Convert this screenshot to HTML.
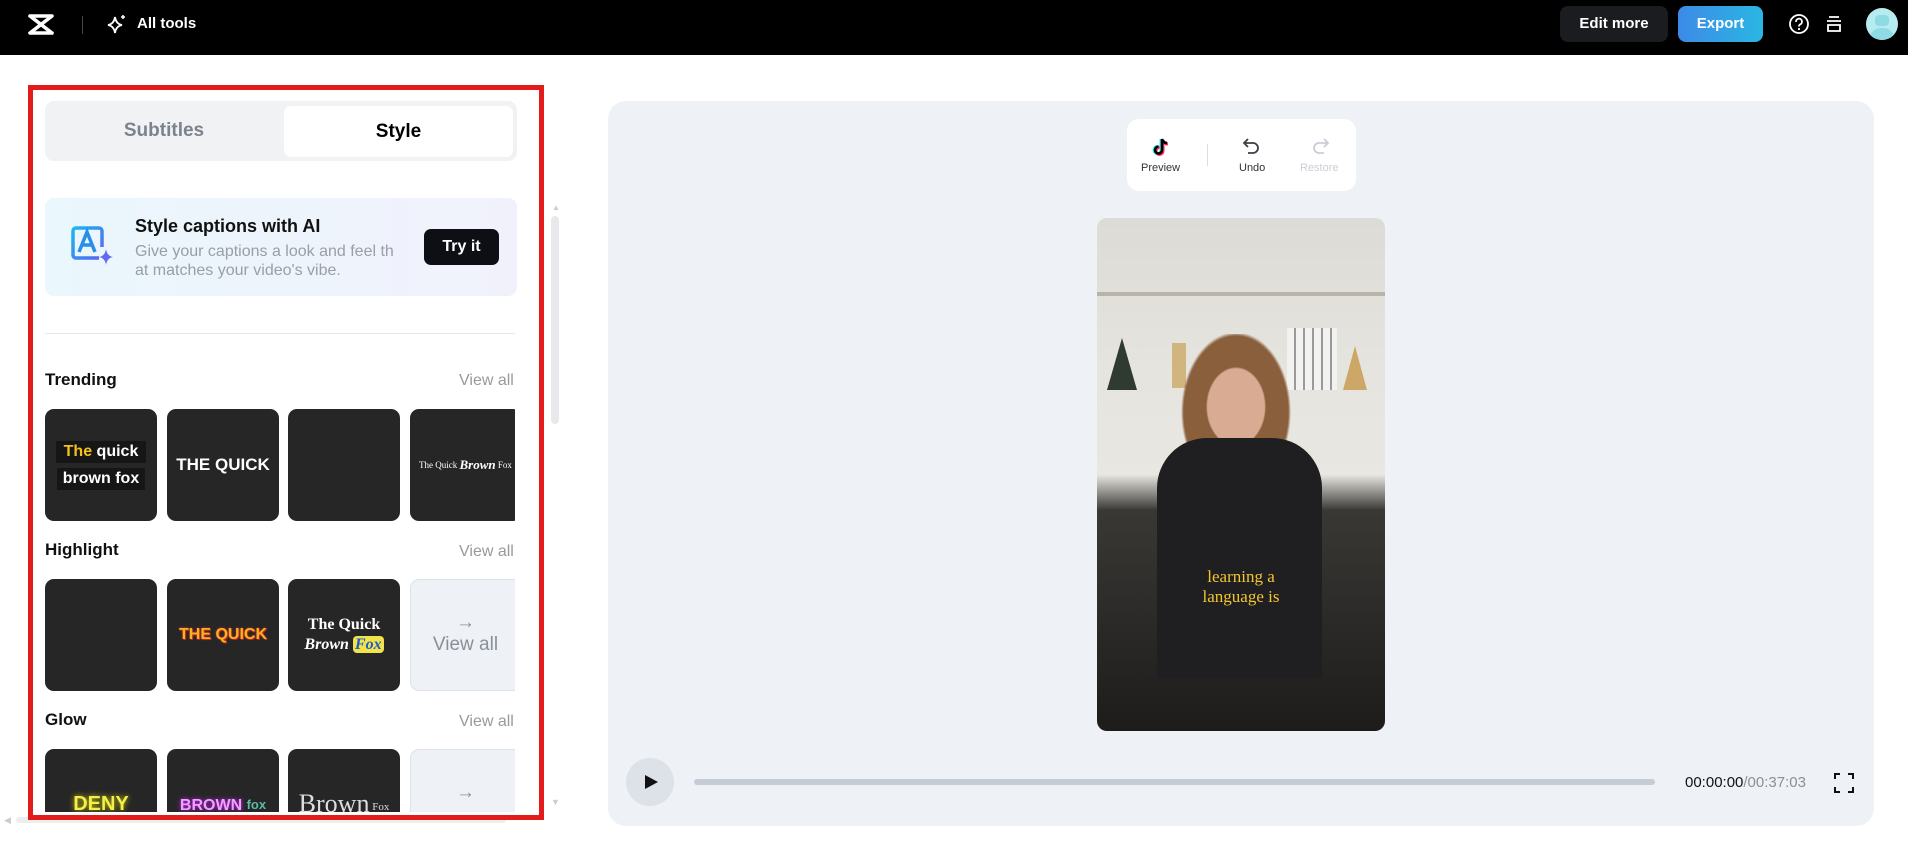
<!DOCTYPE html>
<html><head><meta charset="utf-8"><style>
*{box-sizing:border-box;margin:0;padding:0}
body{width:1908px;height:855px;overflow:hidden;background:#fff;font-family:"Liberation Sans",sans-serif;position:relative}
.abs{position:absolute}
.top{left:0;top:0;width:1908px;height:55px;background:#000}
.thumb{position:absolute;width:112px;height:112px;background:#262626;border-radius:9px;overflow:hidden;display:flex;align-items:center;justify-content:center;color:#fff;font-weight:bold}
.lbl{position:absolute;left:45px;font-size:17px;font-weight:bold;color:#111}
.va{position:absolute;left:459px;font-size:16px;color:#999}
.va2{position:absolute;width:110px;height:112px;background:#eef1f5;border:1px solid #dde2e8;border-radius:9px 0 0 9px;border-right:none;color:#8a9099;text-align:center}
</style></head><body>
<div class="abs top"></div>
<svg class="abs" style="left:25px;top:12px" width="30" height="26" viewBox="0 0 30 26"><path d="M5 4H27L5 21H27M5 4L27 21" fill="none" stroke="#fff" stroke-width="3.6" stroke-linejoin="round" stroke-linecap="round"/></svg>
<div class="abs" style="left:82px;top:16px;width:1px;height:18px;background:#444"></div>
<svg class="abs" style="left:106px;top:13px" width="22" height="22" viewBox="0 0 22 22"><path d="M9 4 Q10 11 16 12 Q10 13 9 20 Q8 13 2 12 Q8 11 9 4Z" fill="none" stroke="#fff" stroke-width="1.8"/><path d="M17 2v4M15 4h4" stroke="#fff" stroke-width="1.5"/></svg>
<div class="abs" style="left:137px;top:15px;color:#fff;font-size:15px;font-weight:bold">All tools</div>
<div class="abs" style="left:1560px;top:6px;width:108px;height:36px;background:#1b1c1f;border-radius:8px;color:#fff;font-weight:bold;font-size:15px;text-align:center;line-height:36px">Edit more</div>
<div class="abs" style="left:1678px;top:6px;width:85px;height:36px;background:linear-gradient(90deg,#3c8ae6,#2ab7e3);border-radius:8px;color:#fff;font-weight:bold;font-size:15px;text-align:center;line-height:36px">Export</div>
<svg class="abs" style="left:1788px;top:13px" width="22" height="22" viewBox="0 0 22 22"><circle cx="11" cy="11" r="9" fill="none" stroke="#fff" stroke-width="1.8"/><path d="M8 9a3 3 0 1 1 4 2.5c-1 .5-1 1-1 2" fill="none" stroke="#fff" stroke-width="1.8"/><circle cx="11" cy="16" r="1.1" fill="#fff"/></svg>
<svg class="abs" style="left:1824px;top:14px" width="20" height="20" viewBox="0 0 20 20"><path d="M5 3h10M3 7h14M4 11h12v6H4z" fill="none" stroke="#fff" stroke-width="1.8"/></svg>
<div class="abs" style="left:1866px;top:8px;width:32px;height:32px;border-radius:50%;background:#b6ecf0;overflow:hidden"><div style="margin:7px auto 0;width:14px;height:11px;background:#8edbe4;border-radius:4px"></div><div style="margin:2px auto 0;width:26px;height:14px;background:#8edbe4;border-radius:12px 12px 0 0"></div></div>

<!-- left panel -->
<div class="abs" style="left:4px;top:815px;color:#ccc;font-size:9px">◀</div>
<div class="abs" style="left:16px;top:817px;width:490px;height:6px;background:#eee;border-radius:3px"></div>
<div class="abs" style="left:45px;top:101px;width:472px;height:60px;background:#f1f2f4;border-radius:9px"></div>
<div class="abs" style="left:45px;top:101px;width:238px;height:60px;line-height:60px;text-align:center;color:#7c838e;font-weight:bold;font-size:19px">Subtitles</div>
<div class="abs" style="left:284px;top:106px;width:229px;height:51px;background:#fff;border-radius:7px;line-height:51px;text-align:center;color:#000;font-weight:bold;font-size:19px">Style</div>
<div class="abs" style="left:45px;top:198px;width:472px;height:98px;background:linear-gradient(90deg,#eaf7fc,#f1f1fc);border-radius:9px"></div>
<svg class="abs" style="left:68px;top:225px" width="48" height="48" viewBox="0 0 46 48"><defs><linearGradient id="g" x1="0" y1="0" x2="1" y2="1"><stop offset="0" stop-color="#1ab8ee"/><stop offset="1" stop-color="#5a63f0"/></linearGradient></defs><path d="M30 33H7a3 3 0 0 1-3-3V6a3 3 0 0 1 3-3h23a3 3 0 0 1 3 3v16" fill="none" stroke="url(#g)" stroke-width="3.5"/><path d="M10 27l8-20 8 20M13 20h10" fill="none" stroke="#2a8ee8" stroke-width="3.5"/><path d="M37 24q1 7 7 8q-6 1-7 8q-1-7-7-8q6-1 7-8z" fill="#5f6af2"/></svg>
<div class="abs" style="left:135px;top:216px;font-size:18px;font-weight:bold;color:#111">Style captions with AI</div>
<div class="abs" style="left:135px;top:242px;font-size:16px;color:#9a9ea6;line-height:19px;width:290px">Give your captions a look and feel th<br>at matches your video's vibe.</div>
<div class="abs" style="left:424px;top:229px;width:75px;height:36px;background:#0e0f14;border-radius:7px;color:#fff;font-weight:bold;font-size:16px;text-align:center;line-height:36px">Try it</div>
<div class="abs" style="left:45px;top:333px;width:470px;height:1px;background:#e5e7ea"></div>
<div class="abs" style="left:552px;top:203px;color:#ccc;font-size:8px">▲</div>
<div class="abs" style="left:551px;top:216px;width:8px;height:208px;background:#e8e9ec;border-radius:4px"></div>
<div class="abs" style="left:551px;top:797px;color:#ccc;font-size:9px">▼</div>

<div class="lbl" style="top:370px">Trending</div><div class="va" style="top:372px">View all</div>
<div class="abs" style="left:45px;top:409px;width:470px;height:403px;overflow:hidden">
 <div class="thumb" style="left:0;top:0;flex-direction:column;font-size:16px;gap:5px"><span style="background:#161616;padding:2px 8px"><span style="color:#f2c21b">The</span> quick</span><span style="background:#161616;padding:2px 6px">brown fox</span></div>
 <div class="thumb" style="left:122px;top:0;font-size:17px">THE QUICK</div>
 <div class="thumb" style="left:243px;top:0"></div>
 <div class="thumb" style="left:365px;top:0;font-family:'Liberation Serif',serif;font-size:9px;justify-content:flex-start;padding-left:9px;white-space:nowrap;font-weight:normal">The Quick&nbsp;<i style="font-size:13px;font-weight:bold">Brown</i>&nbsp;Fox</div>
 <div class="thumb" style="left:0;top:170px"></div>
 <div class="thumb" style="left:122px;top:170px;color:#f7b31b;font-size:16px;text-shadow:0 0 2px #d33,1px 1px 0 #b22">THE QUICK</div>
 <div class="thumb" style="left:243px;top:170px;flex-direction:column;font-family:'Liberation Serif',serif;font-size:16px;line-height:20px"><span>The Quick</span><i>Brown <span style="background:#f2e34a;color:#1a5bd0;border-radius:4px;padding:0 2px">Fox</span></i></div>
 <div class="va2" style="left:365px;top:170px;padding-top:32px;font-size:19px">→<br>View all</div>
 <div class="thumb" style="left:0;top:340px;align-items:flex-start;padding-top:44px;color:#f3ee4a;font-size:20px;text-shadow:0 0 6px #cc0">DENY</div>
 <div class="thumb" style="left:122px;top:340px;align-items:flex-start;padding-top:48px;color:#f2a0ff;font-size:16px;text-shadow:0 0 5px #c2f">BROWN&nbsp;<span style="color:#5dbaa8;font-size:13px;text-shadow:none">fox</span></div>
 <div class="thumb" style="left:243px;top:340px;align-items:flex-start;padding-top:40px;color:#ddd;font-weight:normal;font-family:'Liberation Serif',serif;font-size:26px">Brown<span style="font-size:11px;padding-top:12px">&nbsp;Fox</span></div>
 <div class="va2" style="left:365px;top:340px;padding-top:32px;font-size:19px">→</div>
</div>
<div class="lbl" style="top:540px">Highlight</div><div class="va" style="top:543px">View all</div>
<div class="lbl" style="top:710px">Glow</div><div class="va" style="top:713px">View all</div>
<div class="abs" style="left:28px;top:85px;width:516px;height:735px;border:5px solid #e31b1b"></div>

<!-- right preview -->
<div class="abs" style="left:608px;top:101px;width:1266px;height:725px;background:#eef1f5;border-radius:18px"></div>
<div class="abs" style="left:1127px;top:119px;width:229px;height:72px;background:#fff;border-radius:12px"></div>
<svg class="abs" style="left:1152px;top:137px" width="18" height="20" viewBox="0 0 18 20"><path d="M10 2v11a3.5 3.5 0 1 1-3.5-3.5M10 2q1 4 5 4" fill="none" stroke="#25f4ee" stroke-width="3" transform="translate(-1,0)"/><path d="M10 2v11a3.5 3.5 0 1 1-3.5-3.5M10 2q1 4 5 4" fill="none" stroke="#fe2c55" stroke-width="3" transform="translate(1,1)"/><path d="M10 2v11a3.5 3.5 0 1 1-3.5-3.5M10 2q1 4 5 4" fill="none" stroke="#000" stroke-width="2.6"/></svg>
<div class="abs" style="left:1141px;top:162px;font-size:11px;color:#333">Preview</div>
<div class="abs" style="left:1207px;top:144px;width:1px;height:22px;background:#ddd"></div>
<svg class="abs" style="left:1242px;top:137px" width="20" height="18" viewBox="0 0 20 18"><path d="M6 2L2 6l4 4M2 6h9a5 5 0 0 1 0 10H6" fill="none" stroke="#3a3f48" stroke-width="1.8"/></svg>
<div class="abs" style="left:1239px;top:162px;font-size:11px;color:#333">Undo</div>
<svg class="abs" style="left:1310px;top:137px" width="20" height="18" viewBox="0 0 20 18"><path d="M14 2l4 4-4 4M18 6H9a5 5 0 0 0 0 10h5" fill="none" stroke="#c9ced6" stroke-width="1.8"/></svg>
<div class="abs" style="left:1300px;top:162px;font-size:11px;color:#c9ced6">Restore</div>

<div class="abs" style="left:1097px;top:218px;width:288px;height:513px;border-radius:10px;overflow:hidden;background:linear-gradient(180deg,#dcdbd6 0%,#e6e4de 30%,#e9e7e1 50%,#3a3835 57%,#1d1c1b 100%)">
 <div class="abs" style="left:0;top:74px;width:288px;height:4px;background:#b8b4ab"></div>
 <div class="abs" style="left:10px;top:120px;width:30px;height:52px;background:#2f3a31;clip-path:polygon(50% 0,100% 100%,0 100%)"></div>
 <div class="abs" style="left:75px;top:125px;width:14px;height:45px;background:#d1b57e"></div>
 <div class="abs" style="left:190px;top:110px;width:50px;height:62px;background:repeating-linear-gradient(90deg,#f2f2f0 0 7px,#9a9a98 7px 9px)"></div>
 <div class="abs" style="left:246px;top:128px;width:24px;height:44px;background:#cda767;clip-path:polygon(50% 0,100% 100%,0 100%)"></div>
 <div class="abs" style="left:64px;top:116px;width:150px;height:260px;background:radial-gradient(ellipse 30px 40px at 50% 28%,#d8ab92 0 95%,transparent 100%),radial-gradient(ellipse 55px 80px at 50% 30%,#8a5f3c 0 95%,transparent 100%)"></div>
 <div class="abs" style="left:60px;top:220px;width:165px;height:240px;background:#1f1f21;border-radius:50px 50px 0 0"></div>
 <div class="abs" style="left:0;top:349px;width:288px;text-align:center;font-family:'Liberation Serif',serif;color:#f3c52e;font-size:17px;line-height:20px">learning a<br>language is</div>
</div>

<div class="abs" style="left:626px;top:758px;width:48px;height:48px;border-radius:50%;background:#dde2e8"></div>
<svg class="abs" style="left:643px;top:774px" width="16" height="16" viewBox="0 0 16 16"><path d="M2 1l13 7-13 7z" fill="#111"/></svg>
<div class="abs" style="left:694px;top:779px;width:961px;height:6px;border-radius:3px;background:#c6ccd5"></div>
<div class="abs" style="left:1685px;top:774px;font-size:15px;color:#111">00:00:00<span style="color:#8a9099">/00:37:03</span></div>
<svg class="abs" style="left:1834px;top:773px" width="20" height="20" viewBox="0 0 20 20"><path d="M1 6V1h5M14 1h5v5M19 14v5h-5M6 19H1v-5" fill="none" stroke="#111" stroke-width="2"/></svg>
</body></html>
